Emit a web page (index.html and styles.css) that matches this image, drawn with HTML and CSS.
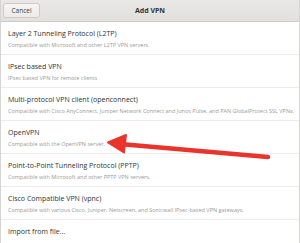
FILE: index.html
```html
<!DOCTYPE html>
<html lang="en">
<head>
    <meta charset="UTF-8">
    <title>Add VPN</title>
    <link rel="stylesheet" href="styles.css">
</head>
<body>
    <div class="dialog">
        <div class="header">
            <button class="cancel-button">Cancel</button>
            <div class="header-title">Add VPN</div>
        </div>

        <ul class="vpn-list">
            <li class="vpn-row">
                <div class="vpn-name">Layer 2 Tunneling Protocol (L2TP)</div>
                <div class="vpn-desc">Compatible with Microsoft and other L2TP VPN servers.</div>
            </li>
            <li class="vpn-row">
                <div class="vpn-name">IPsec based VPN</div>
                <div class="vpn-desc">IPsec based VPN for remote clients</div>
            </li>
            <li class="vpn-row">
                <div class="vpn-name">Multi-protocol VPN client (openconnect)</div>
                <div class="vpn-desc">Compatible with Cisco AnyConnect, Juniper Network Connect and Junos Pulse, and PAN GlobalProtect SSL VPNs.</div>
            </li>
            <li class="vpn-row">
                <div class="vpn-name">OpenVPN</div>
                <div class="vpn-desc">Compatible with the OpenVPN server.</div>
            </li>
            <li class="vpn-row">
                <div class="vpn-name">Point-to-Point Tunneling Protocol (PPTP)</div>
                <div class="vpn-desc">Compatible with Microsoft and other PPTP VPN servers.</div>
            </li>
            <li class="vpn-row">
                <div class="vpn-name">Cisco Compatible VPN (vpnc)</div>
                <div class="vpn-desc">Compatible with various Cisco, Juniper, Netscreen, and Sonicwall IPsec-based VPN gateways.</div>
            </li>
            <li class="vpn-row">
                <div class="vpn-name">Import from file…</div>
            </li>
        </ul>

        <!-- annotation arrow drawn over the list -->
        <svg class="arrow" width="300" height="243" viewBox="0 0 300 243">
            <line x1="120" y1="144" x2="268" y2="157" stroke="#e8342a" stroke-width="4.5" stroke-linecap="round"/>
            <polygon points="108,142.5 126,135 124,152.5" fill="#e8342a" stroke="#e8342a" stroke-width="2" stroke-linejoin="round"/>
        </svg>
    </div>
</body>
</html>
```

FILE: styles.css
```css
* {
    margin: 0;
    padding: 0;
    box-sizing: border-box;
}

body {
    font-family: 'Open Sans', 'Noto Sans', sans-serif;
    background: #ffffff;
    color: #2e3436;
    width: 300px;
    height: 243px;
    overflow: hidden;
}

.dialog {
    position: relative;
    width: 300px;
    height: 243px;
    border-left: 1px solid #d6d4d1;
    border-right: 1px solid #d6d4d1;
    overflow: hidden;
}

.header {
    height: 22px;
    background: linear-gradient(#e9e8e6, #e2e0dd);
    border-bottom: 1px solid #cfcbc6;
    display: flex;
    align-items: center;
    justify-content: center;
    position: relative;
}

.cancel-button {
    position: absolute;
    left: 2px;
    top: 3px;
    width: 37px;
    height: 15px;
    font-family: inherit;
    font-size: 6.5px;
    color: #3a3f40;
    background: linear-gradient(#f6f5f4, #edebe9);
    border: 1px solid #cfcac5;
    border-radius: 3px;
}

.header-title {
    font-size: 7px;
    font-weight: 700;
    color: #2e3436;
}

.vpn-list {
    list-style: none;
}

.vpn-row {
    height: 33px;
    padding: 7px 7px 0;
    border-bottom: 1px solid #ececec;
    display: flex;
    flex-direction: column;
    gap: 2px;
}

.vpn-name {
    font-size: 7px;
    line-height: 10px;
    color: #2e3436;
    white-space: nowrap;
}

.vpn-desc {
    font-size: 5.5px;
    line-height: 8px;
    color: #9a9b9a;
    white-space: nowrap;
}

.arrow {
    position: absolute;
    left: -1px;
    top: 0;
}
```
